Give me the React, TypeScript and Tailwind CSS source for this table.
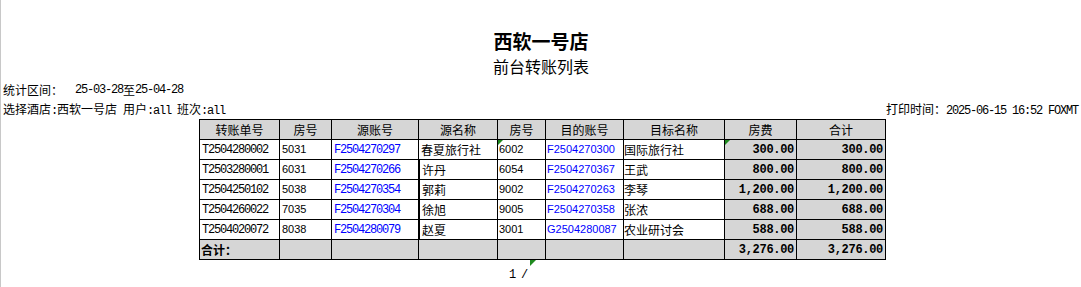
import React from "react";

const CJK = "font-['Noto_Sans_CJK_SC',sans-serif]";
const MONO = "font-['Liberation_Mono',monospace] tracking-[-1.2px]";

function L({ children }: { children: React.ReactNode }) {
  return <span className={`${MONO} whitespace-pre`}>{children}</span>;
}

function Tri({ className = "" }: { className?: string }) {
  return (
    <svg width="6" height="6" viewBox="0 0 6 6" className={`absolute ${className}`}>
      <polygon points="0,0 6,0 0,6" fill="#1f8a1f" />
    </svg>
  );
}

const rows = [
  ["T2504280002", "5031", "F2504270297", "春夏旅行社", "6002", "F2504270300", "国际旅行社", "300.00", "300.00"],
  ["T2503280001", "6031", "F2504270266", "许丹", "6054", "F2504270367", "王武", "800.00", "800.00"],
  ["T2504250102", "5038", "F2504270354", "郭莉", "9002", "F2504270263", "李琴", "1,200.00", "1,200.00"],
  ["T2504260022", "7035", "F2504270304", "徐旭", "9005", "F2504270358", "张浓", "688.00", "688.00"],
  ["T2504020072", "8038", "F2504280079", "赵夏", "3001", "G2504280087", "农业研讨会", "588.00", "588.00"],
];

const headers = ["转账单号", "房号", "源账号", "源名称", "房号", "目的账号", "目标名称", "房费", "合计"];

const cell = "h-[20px] border-r border-b border-black flex items-center overflow-hidden whitespace-nowrap relative";

export default function App() {
  return (
    <div className={`w-[1081px] h-[287px] bg-white border-l border-[#c8c8c8] text-black ${CJK} text-[12px] overflow-hidden`}>
      <div className="pt-[29px] h-[53px] text-center text-[19px] leading-[24px] font-bold">西软一号店</div>
      <div className="h-[27px] pt-[3px] text-center text-[16px] leading-[20px]">前台转账列表</div>
      <div className="h-[20px] pl-[2px] flex items-center leading-[20px] whitespace-pre">
        <span>统计区间：</span>
        <L>{"  25-03-28"}</L>
        <span>至</span>
        <L>25-04-28</L>
      </div>
      <div className="h-[19px] pl-[2px] pr-[3px] flex items-center justify-between leading-[19px]">
        <div className="whitespace-pre">
          选择酒店<L>:</L>西软一号店<L> </L>用户<L>:all </L>班次<L>:all</L>
        </div>
        <div className="whitespace-pre">
          打印时间：<L>2025-06-15 16:52 FOXMT</L>
        </div>
      </div>
      <div className="flex justify-center pl-[3px]">
        <div className="w-[687px]">
          <div className="grid grid-cols-[80px_52px_87px_79px_48px_78px_101px_72px_89px] border-l border-t border-black">
            {headers.map((h, i) => (
              <div key={i} className={`${cell} justify-center bg-[#d6d6d6]`}>
                {h}
              </div>
            ))}
            {rows.map((r, ri) => (
              <React.Fragment key={ri}>
                <div className={`${cell} pl-[2px]`}>
                  <span className="font-['Liberation_Mono',monospace] tracking-[-1.2px]">{r[0]}</span>
                </div>
                <div className={`${cell} pl-[2px] font-['Liberation_Sans',sans-serif] text-[11px]`}>{r[1]}</div>
                <div className={`${cell} pl-[2px] text-[#0000ff]`}>
                  <span className="font-['Liberation_Mono',monospace] tracking-[-1.2px]">{r[2]}</span>
                </div>
                <div className={`${cell} ${ri > 0 ? "shadow-[inset_1px_0_0_#000] pl-[3px]" : "pl-[2px]"}`}>{r[3]}</div>
                <div className={`${cell} pl-[1px] font-['Liberation_Sans',sans-serif] text-[11px]`}>
                  {ri === 0 && <Tri className="left-[-1px] top-0" />}
                  {r[4]}
                </div>
                <div className={`${cell} pl-[1px] font-['Liberation_Sans',sans-serif] text-[11px] text-[#0000ff]`}>{r[5]}</div>
                <div className={`${cell} pl-0`}>{r[6]}</div>
                <div className={`${cell} justify-end pr-[2px] bg-[#d6d6d6] font-['Liberation_Mono',monospace] font-bold tracking-[-0.3px]`}>
                  {ri === 0 && <Tri className="left-[-1px] top-0" />}
                  {r[7]}
                </div>
                <div className={`${cell} justify-end pr-[2px] bg-[#d6d6d6] font-['Liberation_Mono',monospace] font-bold tracking-[-0.3px]`}>
                  {r[8]}
                </div>
              </React.Fragment>
            ))}
            <div className={`${cell} pl-[1px] bg-[#d6d6d6] font-bold`}>合计：</div>
            <div className={`${cell} bg-[#d6d6d6]`} />
            <div className={`${cell} bg-[#d6d6d6]`} />
            <div className={`${cell} bg-[#d6d6d6]`} />
            <div className={`${cell} bg-[#d6d6d6]`} />
            <div className={`${cell} bg-[#d6d6d6]`} />
            <div className={`${cell} bg-[#d6d6d6]`} />
            <div className={`${cell} justify-end pr-[2px] bg-[#d6d6d6] font-['Liberation_Mono',monospace] font-bold tracking-[-0.3px]`}>3,276.00</div>
            <div className={`${cell} justify-end pr-[2px] bg-[#d6d6d6] font-['Liberation_Mono',monospace] font-bold tracking-[-0.3px]`}>3,276.00</div>
          </div>
          <div className="relative h-[24px] pl-[310px] pt-[3px] leading-[20px]">
            <Tri className="left-[331px] top-0" />
            <L>1 /</L>
          </div>
        </div>
      </div>
    </div>
  );
}
